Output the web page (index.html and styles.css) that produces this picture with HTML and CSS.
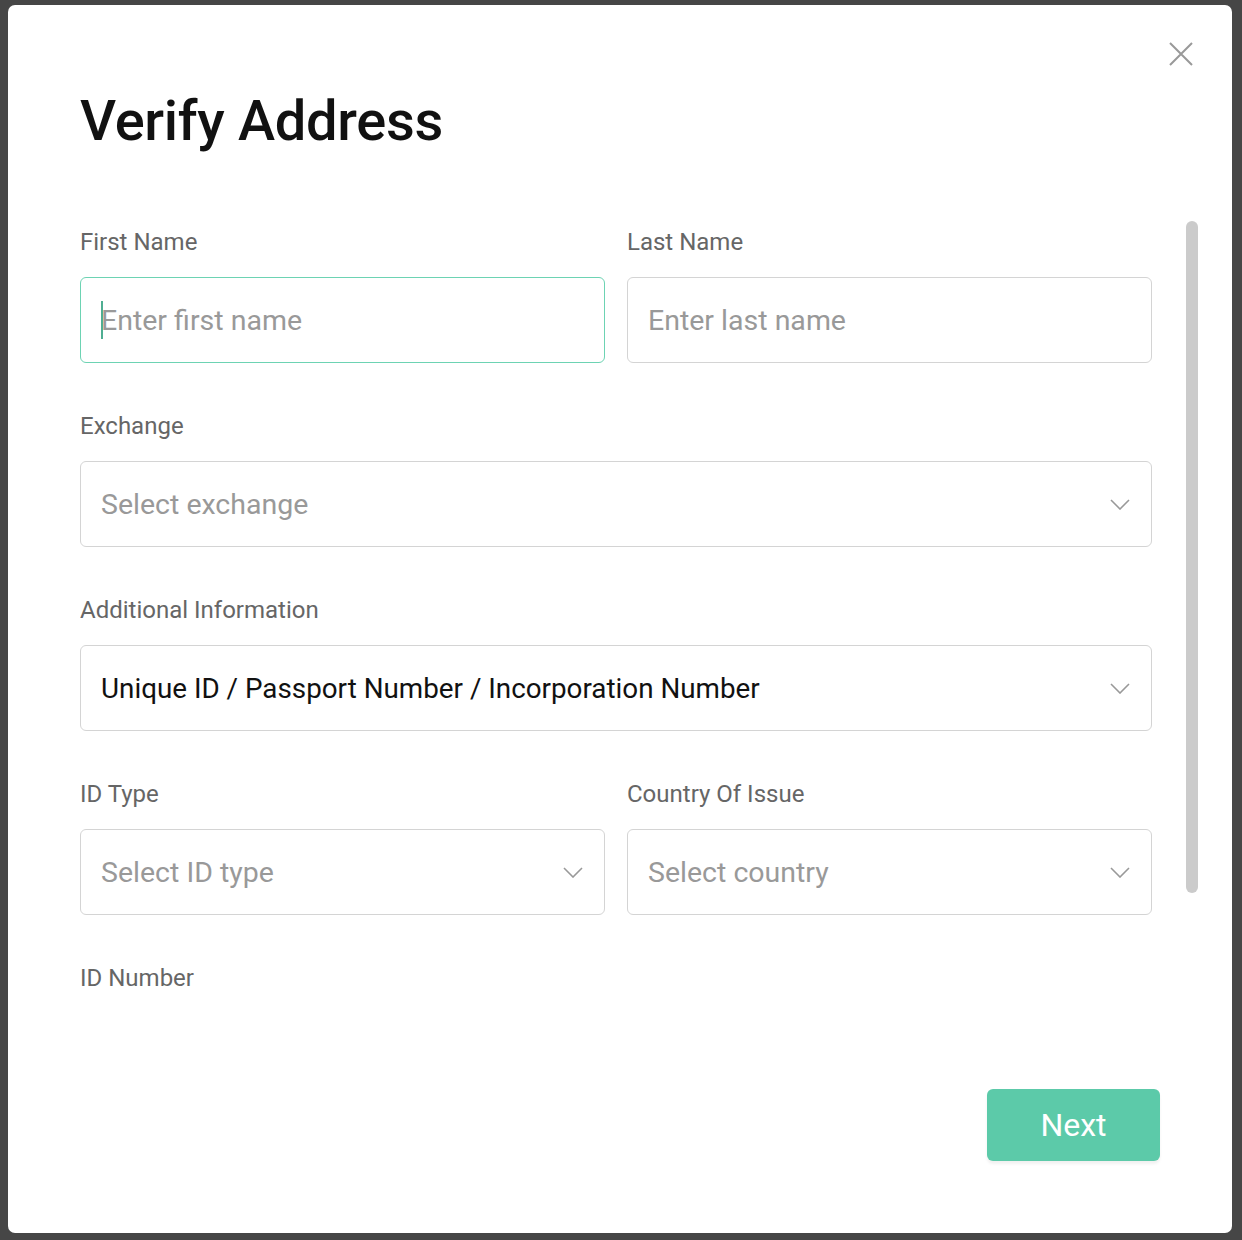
FILE: index.html
```html
<!DOCTYPE html>
<html lang="en">
<head>
    <meta charset="UTF-8">
    <meta name="viewport" content="width=device-width, initial-scale=1.0">
    <title>Verify Address</title>
    <link rel="stylesheet" href="styles.css">
</head>
<body>
    <div class="modal">
        <button class="close" aria-label="Close">
            <svg width="24" height="24" viewBox="0 0 24 24"><path d="M1 1 L23 23 M23 1 L1 23" stroke="#999" stroke-width="2" fill="none"/></svg>
        </button>

        <h1>Verify Address</h1>

        <div class="scroll">
            <div class="form">
                <div class="row">
                    <div class="group">
                        <label>First Name</label>
                        <div class="field focused">
                            <span class="caret"></span>
                            <input type="text" placeholder="Enter first name">
                        </div>
                    </div>
                    <div class="group">
                        <label>Last Name</label>
                        <div class="field">
                            <input type="text" placeholder="Enter last name">
                        </div>
                    </div>
                </div>

                <div class="group">
                    <label>Exchange</label>
                    <div class="field select">
                        <span class="placeholder">Select exchange</span>
                        <svg class="chevron" width="20" height="11" viewBox="0 0 20 11"><path d="M1 1 L10 10 L19 1" stroke="#999" stroke-width="1.6" fill="none"/></svg>
                    </div>
                </div>

                <div class="group">
                    <label>Additional Information</label>
                    <div class="field select">
                        <span class="value">Unique ID / Passport Number / Incorporation Number</span>
                        <svg class="chevron" width="20" height="11" viewBox="0 0 20 11"><path d="M1 1 L10 10 L19 1" stroke="#999" stroke-width="1.6" fill="none"/></svg>
                    </div>
                </div>

                <div class="row">
                    <div class="group">
                        <label>ID Type</label>
                        <div class="field select">
                            <span class="placeholder">Select ID type</span>
                            <svg class="chevron" width="20" height="11" viewBox="0 0 20 11"><path d="M1 1 L10 10 L19 1" stroke="#999" stroke-width="1.6" fill="none"/></svg>
                        </div>
                    </div>
                    <div class="group">
                        <label>Country Of Issue</label>
                        <div class="field select">
                            <span class="placeholder">Select country</span>
                            <svg class="chevron" width="20" height="11" viewBox="0 0 20 11"><path d="M1 1 L10 10 L19 1" stroke="#999" stroke-width="1.6" fill="none"/></svg>
                        </div>
                    </div>
                </div>

                <div class="group">
                    <label>ID Number</label>
                    <div class="field">
                        <input type="text" placeholder="Enter ID number">
                    </div>
                </div>
            </div>
            <div class="thumb"></div>
        </div>

        <div class="footer">
            <button class="next">Next</button>
        </div>
    </div>
</body>
</html>
```

FILE: styles.css
```css
* {
    box-sizing: border-box;
}
body {
    margin: 0;
    padding: 5px 10px 7px 8px;
    background-color: #464646;
    font-family: Roboto, "Noto Sans", sans-serif;
}
.modal {
    position: relative;
    height: 1228px;
    background-color: #fff;
    border-radius: 7px;
    padding: 0 80px 0 72px;
}
.close {
    position: absolute;
    top: 37px;
    right: 39px;
    width: 24px;
    height: 24px;
    padding: 0;
    border: none;
    background: none;
    cursor: pointer;
}
.close svg {
    display: block;
}
h1 {
    margin: 0;
    padding-top: 82px;
    font-size: 56px;
    line-height: 68px;
    font-weight: 500;
    color: #111;
    letter-spacing: -0.3px;
}
.scroll {
    position: relative;
    height: 791px;
    margin-top: 64px;
    margin-right: -80px;
    padding-right: 80px;
    overflow: hidden;
}
.form {
    padding-top: 9px;
}
.row {
    display: grid;
    grid-template-columns: 1fr 1fr;
    column-gap: 22px;
}
.group {
    margin-bottom: 49px;
}
label {
    display: block;
    margin-bottom: 21px;
    font-size: 24px;
    line-height: 28px;
    color: #666;
}
.field {
    position: relative;
    display: flex;
    align-items: center;
    height: 86px;
    padding: 0 20px;
    border: 1px solid #d4d4d4;
    border-radius: 6px;
}
.field.focused {
    border-color: #6dd3b3;
}
.field input {
    width: 100%;
    border: none;
    outline: none;
    padding: 0;
    font-family: inherit;
    font-size: 28.5px;
    color: #222;
    background: none;
}
.field input::placeholder {
    color: #999;
}
.caret {
    position: absolute;
    left: 20px;
    top: 23px;
    width: 2px;
    height: 38px;
    background-color: #4fae92;
}
.select {
    justify-content: space-between;
}
.placeholder,
.value {
    font-size: 28.5px;
}
.placeholder {
    color: #999;
}
.value {
    font-size: 27.8px;
    color: #111;
}
.chevron {
    margin-right: 1px;
}
.thumb {
    position: absolute;
    top: 2px;
    right: 34px;
    width: 12px;
    height: 672px;
    border-radius: 6px;
    background-color: #cbcbcb;
}
.footer {
    display: flex;
    justify-content: flex-end;
    margin-top: 79px;
    margin-right: -8px;
}
.next {
    width: 173px;
    height: 72px;
    border: none;
    border-radius: 6px;
    background-color: #5ccaa9;
    color: #fff;
    font-family: inherit;
    font-size: 32px;
    box-shadow: 0 3px 3px rgba(0, 0, 0, 0.06);
    cursor: pointer;
}
```
